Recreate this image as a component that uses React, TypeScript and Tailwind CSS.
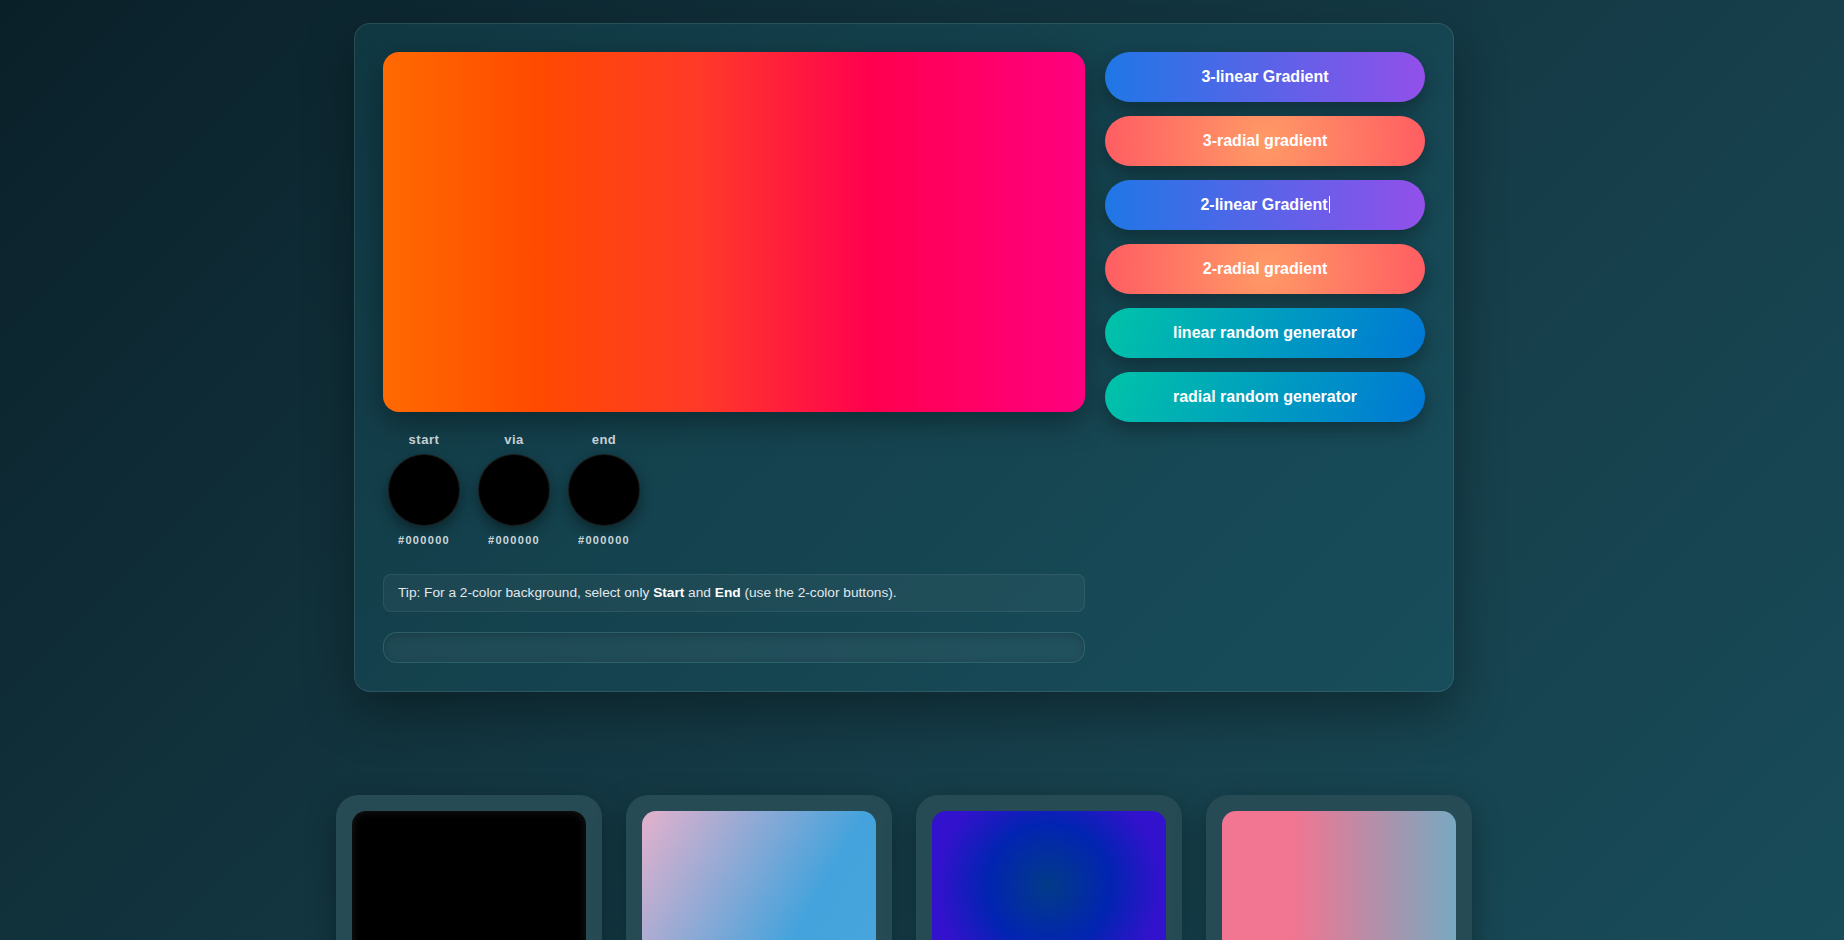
const font = { fontFamily: '"Liberation Sans", Arial, sans-serif' };

const buttons = [
  { label: "3-linear Gradient", bg: "bg-[linear-gradient(90deg,#1f77e6,#9250ea)]" },
  { label: "3-radial gradient", bg: "bg-[radial-gradient(circle,#ff9a66_0%,#ff5d62_100%)]" },
  { label: "2-linear Gradient", bg: "bg-[linear-gradient(90deg,#1f77e6,#9250ea)]", caret: true },
  { label: "2-radial gradient", bg: "bg-[radial-gradient(circle,#ff9a66_0%,#ff5d62_100%)]" },
  { label: "linear random generator", bg: "bg-[linear-gradient(110deg,#00c4a8,#0077d6)]" },
  { label: "radial random generator", bg: "bg-[linear-gradient(110deg,#00c4a8,#0077d6)]" },
];

const pickers = ["start", "via", "end"];

const saved = [
  "bg-black shadow-[inset_0_0_10px_rgba(255,255,255,0.1)]",
  "bg-[linear-gradient(120deg,#e4b1cd_0%,#44a3dc_70%,#48a5dd_100%)]",
  "bg-[radial-gradient(circle,#023b88_0%,#0224b2_45%,#3212cc_80%)]",
  "bg-[linear-gradient(90deg,#f27591_30%,#78a9c1_100%)]",
];

export default function App() {
  return (
    <div
      className="min-h-screen bg-fixed bg-[linear-gradient(135deg,#0a2029_0%,#11313b_34%,#163f4b_66%,#184c59_100%)] pr-[36px] pt-[23px] pb-16"
      style={font}
    >
      <div className="mx-auto w-[1100px] rounded-2xl border border-white/10 bg-[#1d6b7d]/25 p-7 shadow-[0_20px_50px_rgba(0,0,0,0.35)]">
        <div className="grid grid-cols-[1fr_320px] gap-5">
          <div className="flex flex-col">
            <div className="h-[360px] rounded-2xl bg-[linear-gradient(90deg,#ff6a00_0%,#ff4a00_22%,#ff3a28_45%,#ff0050_70%,#ff0080_100%)] shadow-[0_10px_30px_rgba(0,0,0,0.35)]" />

            <div className="mt-5 flex gap-2">
              {pickers.map((p) => (
                <div key={p} className="flex w-[82px] flex-col items-center">
                  <span className="text-[13px] font-bold leading-4 tracking-[0.04em] text-[#c5cfd4]">{p}</span>
                  <div className="mt-[6px] h-[72px] w-[72px] rounded-full border border-white/10 bg-black shadow-[0_6px_14px_rgba(0,0,0,0.4)]" />
                  <span className="mt-[6px] text-[11px] font-bold leading-4 tracking-[0.12em] text-[#cdd6da]">#000000</span>
                </div>
              ))}
            </div>

            <div className="mt-[26px] rounded-lg border border-white/[0.07] bg-white/[0.04] px-[14px] py-[10px] text-[13.7px] leading-4 text-[#e2e8ec]">
              Tip: For a 2-color background, select only <b className="text-white">Start</b> and{" "}
              <b className="text-white">End</b> (use the 2-color buttons).
            </div>

            <div className="mt-5 h-[31px] rounded-[14px] border border-[#4d8e99]/30 bg-white/[0.05] shadow-[inset_0_2px_8px_rgba(0,0,0,0.2)]" />
          </div>

          <div className="flex flex-col gap-[14px]">
            {buttons.map((b) => (
              <button
                key={b.label}
                className={`h-[50px] rounded-full text-base font-bold text-white shadow-[0_8px_18px_rgba(0,0,0,0.3)] ${b.bg}`}
              >
                {b.label}
                {b.caret && <span className="ml-px inline-block h-[17px] w-px translate-y-[3px] bg-white" />}
              </button>
            ))}
          </div>
        </div>
      </div>

      <div className="mx-auto mt-[103px] flex w-[1136px] gap-6">
        {saved.map((s, i) => (
          <div key={i} className="w-[266px] rounded-[22px] bg-[#274b54] p-4 shadow-[0_10px_30px_rgba(0,0,0,0.35)]">
            <div className={`h-[150px] rounded-[14px] ${s}`} />
          </div>
        ))}
      </div>
    </div>
  );
}
